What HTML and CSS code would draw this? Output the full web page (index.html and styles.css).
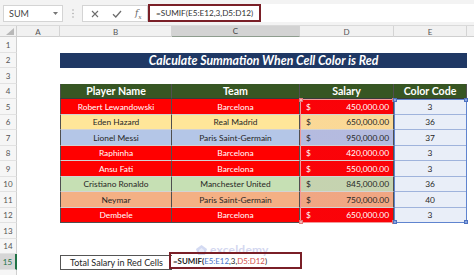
FILE: index.html
```html
<!DOCTYPE html>
<html>
<head>
<meta charset="utf-8">
<link rel="stylesheet" href="styles.css">
</head>
<body>
<div class="app">
  <div class="fbar">
    <div class="namebox"><span>SUM</span><svg class="caret" width="5" height="3" viewBox="0 0 5 3"><polygon points="0,0 5,0 2.5,3" fill="#777"/></svg></div>
    <div class="grip"><svg width="2" height="9" viewBox="0 0 2 9"><circle cx="1" cy="1" r="0.8" fill="#aaa"/><circle cx="1" cy="4.5" r="0.8" fill="#aaa"/><circle cx="1" cy="8" r="0.8" fill="#aaa"/></svg></div>
    <div class="fxbox">
      <svg class="ico" width="8" height="8" viewBox="0 0 8 8"><path d="M1 1 L7 7 M7 1 L1 7" stroke="#6d6d6d" stroke-width="1.1"/></svg>
      <svg class="ico" width="10" height="8" viewBox="0 0 10 8"><path d="M1 4.2 L3.8 7 L9 1" stroke="#6d6d6d" stroke-width="1.3" fill="none"/></svg>
      <span class="fx">f<sub>x</sub></span>
    </div>
    <div class="finput"><div class="fhl">=SUMIF(E5:E12,3,D5:D12)</div></div>
  </div>

  <div class="sheet">
    <div class="row colhead">
      <div class="corner"><svg width="8" height="7" viewBox="0 0 8 7"><polygon points="8,0 8,7 0,7" fill="#b8b8b8"/></svg></div>
      <div class="ch">A</div><div class="ch">B</div><div class="ch sel">C</div><div class="ch">D</div><div class="ch">E</div><div class="ch last"></div>
    </div>

    <div class="row"><div class="rh">1</div></div>
    <div class="row"><div class="rh">2</div><div class="c"></div><div class="title">Calculate Summation When Cell Color is Red</div></div>
    <div class="row"><div class="rh">3</div></div>
    <div class="row"><div class="rh">4</div><div class="c"></div>
      <div class="tc th first">Player Name</div><div class="tc th">Team</div><div class="tc th">Salary</div><div class="tc th">Color Code</div></div>

    <div class="row"><div class="rh">5</div><div class="c"></div>
      <div class="tc red first">Robert Lewandowski</div><div class="tc red">Barcelona</div><div class="tc red sal"><span>$</span><span>450,000.00</span></div><div class="tc cc">3</div></div>
    <div class="row"><div class="rh">6</div><div class="c"></div>
      <div class="tc yel first">Eden Hazard</div><div class="tc yel">Real Madrid</div><div class="tc yel sal"><span>$</span><span>650,000.00</span></div><div class="tc cc">36</div></div>
    <div class="row"><div class="rh">7</div><div class="c"></div>
      <div class="tc blu first">Lionel Messi</div><div class="tc blu">Paris Saint-Germain</div><div class="tc blu sal"><span>$</span><span>950,000.00</span></div><div class="tc cc">37</div></div>
    <div class="row"><div class="rh">8</div><div class="c"></div>
      <div class="tc red first">Raphinha</div><div class="tc red">Barcelona</div><div class="tc red sal"><span>$</span><span>420,000.00</span></div><div class="tc cc">3</div></div>
    <div class="row"><div class="rh">9</div><div class="c"></div>
      <div class="tc red first">Ansu Fati</div><div class="tc red">Barcelona</div><div class="tc red sal"><span>$</span><span>550,000.00</span></div><div class="tc cc">3</div></div>
    <div class="row"><div class="rh">10</div><div class="c"></div>
      <div class="tc grn first">Cristiano Ronaldo</div><div class="tc grn">Manchester United</div><div class="tc grn sal"><span>$</span><span>845,000.00</span></div><div class="tc cc">36</div></div>
    <div class="row"><div class="rh">11</div><div class="c"></div>
      <div class="tc org first">Neymar</div><div class="tc org">Paris Saint-Germain</div><div class="tc org sal"><span>$</span><span>750,000.00</span></div><div class="tc cc">40</div></div>
    <div class="row"><div class="rh">12</div><div class="c"></div>
      <div class="tc red first lastrow">Dembele</div><div class="tc red lastrow">Barcelona</div><div class="tc red sal lastrow"><span>$</span><span>650,000.00</span></div><div class="tc cc lastrow">3</div></div>

    <div class="row"><div class="rh">13</div></div>
    <div class="row"><div class="rh">14</div></div>
    <div class="row"><div class="rh active">15</div><div class="c"></div>
      <div class="c"><div class="label">Total Salary in Red Cells</div></div>
      <div class="c"><div class="fcell"><b>=SUMIF(</b><span class="refe">E5:E12</span>,3,<span class="refd">D5:D12</span>)</div></div>
    </div>
    <div class="row"><div class="rh"></div></div>

    <div class="hl hl-d"><i class="h tl"></i><i class="h tr"></i><i class="h bl"></i><i class="h br"></i></div>
    <div class="hl hl-e"><i class="h tl"></i><i class="h tr"></i><i class="h bl"></i><i class="h br"></i></div>

    <div class="wm"><svg width="11" height="10" viewBox="0 0 11 10"><path d="M5.5 0 L11 4 L9 10 L2 10 L0 4 Z" fill="#a9b6e6"/><path d="M3 5 L5.5 3 L8 5 L8 8 L3 8 Z" fill="#d7dcf5"/></svg><span>exceldemy</span></div>
  </div>
</div>
</body>
</html>
```

FILE: styles.css
```css
* { box-sizing: border-box; margin: 0; padding: 0; }
html, body { width: 474px; height: 275px; overflow: hidden; background: #fff; }
body { font-family: Lato, "Open Sans", sans-serif; color: #222; }

.app { width: 474px; height: 275px; display: flex; flex-direction: column; }

/* formula bar */
.fbar {
  height: 26px; flex: none; background: #f3f3f3;
  display: flex; align-items: flex-start;
  padding: 4px 0 0 3px; border-bottom: 1px solid #dadada;
}
.namebox {
  width: 60px; height: 17px; margin-top: 1px; background: #fff; border: 1px solid #d4d4d4;
  display: flex; align-items: center; justify-content: space-between;
  padding: 0 4px 0 5px; font-size: 9px; color: #444;
}
.grip { width: 19px; height: 18px; display: flex; align-items: center; justify-content: center; }
.fxbox {
  width: 66px; height: 17px; margin-top: 1px; background: #fff; border: 1px solid #d4d4d4;
  display: flex; align-items: center; padding-left: 8px; gap: 13px;
}
.fx { font-family: "DejaVu Serif", serif; font-style: italic; font-size: 9px; color: #666; }
.fx sub { font-size: 6px; }
.finput { flex: 1; height: 18px; background: #fff; }
.fhl {
  width: 113px; height: 18px; border: 2px solid #7a1f27; background: #fff;
  font-size: 8.2px; color: #333; padding-left: 6px; line-height: 14px; white-space: nowrap; overflow: hidden;
}

/* sheet */
.sheet {
  position: relative; flex: 1;
  display: grid; grid-template-rows: 11px repeat(8, 16px 15px);
}
.row { display: grid; grid-template-columns: 17px 43px 112px 128px 94px 73px 1fr; }
.colhead { background: #f1f1f1; border-bottom: 1px solid #cfcfcf; }
.corner { display: flex; align-items: flex-end; justify-content: flex-end; padding: 0 2px 2px 0; border-right: 1px solid #cfcfcf; }
.ch {
  font-size: 8px; color: #555; display: flex; align-items: center; justify-content: center;
  border-right: 1px solid #d4d4d4;
}
.ch.sel { background: #d3d3d3; border-bottom: 1px solid #8e9d8e; color: #444; }
.ch.last { border-right: none; }

.rh {
  background: #f6f6f6; border-right: 1px solid #cfcfcf; border-bottom: 1px solid #e2e2e2;
  font-size: 8px; color: #555; display: flex; align-items: center; justify-content: center;
}
.rh.active { background: #d6d6d6; color: #217346; border-right: 2px solid #217346; }

.c { position: relative; display: flex; }

.title {
  grid-column: 3 / 7; background: #1f3864; color: #fff;
  font-weight: 700; font-style: italic; font-size: 12.3px;
  display: flex; align-items: center; justify-content: center;
}

.tc {
  display: flex; align-items: center; justify-content: center;
  font-size: 8.4px; white-space: nowrap;
  border-right: 1px solid #4f4f4f; border-bottom: 1px solid #d3d3d3;
}
.tc.first { border-left: 1px solid #4f4f4f; }
.th { background: #375623; color: #fff; font-weight: 700; font-size: 10.6px; border-bottom-color: #3a3a3a; }
.red { background: #ff0000; color: #fff; }
.yel { background: #ffe699; color: #262626; }
.blu { background: #b4c6e7; color: #262626; }
.grn { background: #c6e0b4; color: #262626; }
.org { background: #f4b084; color: #262626; }
.sal {
  justify-content: space-between; padding: 0 4px 0 6px;
  background-image: linear-gradient(rgba(190, 40, 120, 0.07), rgba(190, 40, 120, 0.07));
}
.cc { background: #e9eef8; color: #262626; border-bottom-color: #9fb3dc; border-right-color: #7f9bd3; }
.tc.lastrow { border-bottom-color: #4f4f4f; }
.cc.lastrow { border-bottom-color: #7f9bd3; }

.label {
  flex: 1; margin: 1px 0 0 0; border: 1px solid #555; border-right: none;
  font-size: 9px; color: #262626; display: flex; align-items: center; justify-content: center;
}
.fcell {
  flex: 1; margin: -2px -2px 1px -3px; border: 2px solid #7a1f27; background: transparent;
  font-size: 7.9px; color: #222; padding-left: 2px; white-space: nowrap;
  display: flex; align-items: center; position: relative; z-index: 2;
}
.fcell b { font-weight: 700; color: #222; }
.refe { color: #4a74c9; }
.refd { color: #d2504c; }

/* reference highlights (overlay) */
.hl { position: absolute; top: 73px; height: 124px; pointer-events: none; }
.hl-d { left: 300px; width: 95px; border: 1px solid #f19a9a; }
.hl-e { left: 394px; width: 73px; border: 1px solid #5f84cf; }
.h { position: absolute; width: 4px; height: 4px; }
.hl-d .h { background: #f6b3b3; border: 1px solid #e07b7b; }
.hl-e .h { background: #8aa6e0; border: 1px solid #4e72c0; }
.tl { left: -2px; top: -2px; }
.tr { right: -2px; top: -2px; }
.bl { left: -2px; bottom: -2px; }
.br { right: -2px; bottom: -2px; }

.wm {
  position: absolute; left: 196px; top: 216px; z-index: 1;
  display: flex; align-items: center; gap: 3px; opacity: 0.5;
  font-weight: 700; font-size: 12px; color: #a9b0e2; letter-spacing: 0.2px;
}
```
